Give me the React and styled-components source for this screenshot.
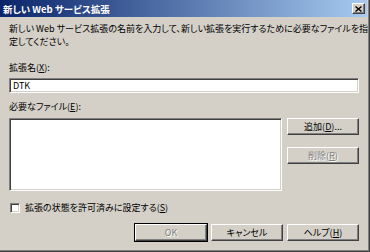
import React from "react";
import styled, { createGlobalStyle } from "styled-components";

const Global = createGlobalStyle`
  html, body { margin: 0; padding: 0; background: #D4D0C8; }
  body { font-family: "Noto Sans CJK JP", "Noto Sans", sans-serif; }
  * { box-sizing: border-box; }
`;

const Window = styled.div`
  width: 370px;
  height: 252px;
  background: #D4D0C8;
  border-right: 1px solid #404040;
  border-bottom: 1px solid #404040;
  box-shadow: inset -1px -1px 0 #808080;
  display: flex;
  flex-direction: column;
  font-size: 9px;
  font-feature-settings: "palt";
  color: #000;
  overflow: hidden;
`;

const TitleBar = styled.div`
  height: 17px;
  margin-right: 2px;
  background: linear-gradient(to right, #0A246A 0%, #A6CAF0 100%);
  display: flex;
  align-items: center;
  justify-content: space-between;
  padding: 0 2px 0 3px;
`;

const Title = styled.span`
  color: #fff;
  font-weight: bold;
  font-size: 9.5px;
  white-space: nowrap;
`;

const CloseBtn = styled.div`
  width: 13px;
  height: 11px;
  background: #D4D0C8;
  border: 1px solid;
  border-color: #fff #404040 #404040 #fff;
  box-shadow: inset -1px -1px 0 #808080;
  display: flex;
  align-items: center;
  justify-content: center;
`;

const Body = styled.div`
  flex: 1;
  display: flex;
  flex-direction: column;
  padding: 0 10px 0 9px;
`;

const Description = styled.div`
  margin-top: 5px;
  display: flex;
  flex-direction: column;
`;

const DescLine = styled.div`
  height: 13px;
  line-height: 13px;
  white-space: nowrap;
`;

const Label = styled.div`
  margin-top: ${(p) => p.$mt}px;
  line-height: 11px;
  white-space: nowrap;
`;

const Sunken = styled.div`
  background: #fff;
  border: 1px solid;
  border-color: #808080 #fff #fff #808080;
  box-shadow: inset 1px 1px 0 #404040, inset -1px -1px 0 #D4D0C8;
`;

const EditBox = styled(Sunken)`
  margin-top: 5px;
  height: 15px;
  display: flex;
  align-items: center;
  padding-left: 3px;
  line-height: 11px;
`;

const FilesRow = styled.div`
  margin-top: 6px;
  display: flex;
  gap: 5px;
`;

const ListBox = styled(Sunken)`
  width: 273px;
  height: 73px;
`;

const SideButtons = styled.div`
  display: flex;
  flex-direction: column;
  gap: 12px;
`;

const Button = styled.div`
  width: 72px;
  height: 17px;
  background: #D4D0C8;
  border: 1px solid;
  border-color: #fff #404040 #404040 #fff;
  box-shadow: inset -1px -1px 0 #808080;
  display: flex;
  align-items: center;
  justify-content: center;
  white-space: nowrap;
  line-height: 11px;
  color: ${(p) => (p.$disabled ? "#808080" : "#000")};
  text-shadow: ${(p) => (p.$disabled ? "1px 1px 0 #fff" : "none")};
  outline: ${(p) => (p.$default ? "1px solid #000" : "none")};
`;

const CheckRow = styled.div`
  margin-top: 11px;
  display: flex;
  align-items: center;
  gap: 5px;
  padding-left: 1px;
  line-height: 11px;
  white-space: nowrap;
`;

const CheckBox = styled(Sunken)`
  width: 10px;
  height: 10px;
`;

const BottomRow = styled.div`
  margin-top: 11px;
  display: flex;
  justify-content: flex-end;
  gap: 4px;
`;

export default function App() {
  return (
    <>
      <Global />
      <Window>
        <TitleBar>
          <Title>新しい Web サービス拡張</Title>
          <CloseBtn>
            <svg width="7" height="6" viewBox="0 0 7 6">
              <path d="M0.5 0.5 L6.5 5.5 M6.5 0.5 L0.5 5.5" stroke="#000" strokeWidth="1.4" />
            </svg>
          </CloseBtn>
        </TitleBar>
        <Body>
          <Description>
            <DescLine>
              新しい Web サービス拡張の名前を入力して、新しい拡張を実行するために必要なファイルを指
            </DescLine>
            <DescLine>定してください。</DescLine>
          </Description>
          <Label $mt={14}>
            拡張名(<u>X</u>):
          </Label>
          <EditBox>DTK</EditBox>
          <Label $mt={8}>
            必要なファイル(<u>E</u>):
          </Label>
          <FilesRow>
            <ListBox />
            <SideButtons>
              <Button>
                追加(<u>D</u>)...
              </Button>
              <Button $disabled>
                削除(<u>R</u>)
              </Button>
            </SideButtons>
          </FilesRow>
          <CheckRow>
            <CheckBox />
            <span>
              拡張の状態を許可済みに設定する(<u>S</u>)
            </span>
          </CheckRow>
          <BottomRow>
            <Button $disabled $default>
              OK
            </Button>
            <Button>キャンセル</Button>
            <Button>
              ヘルプ(<u>H</u>)
            </Button>
          </BottomRow>
        </Body>
      </Window>
    </>
  );
}
